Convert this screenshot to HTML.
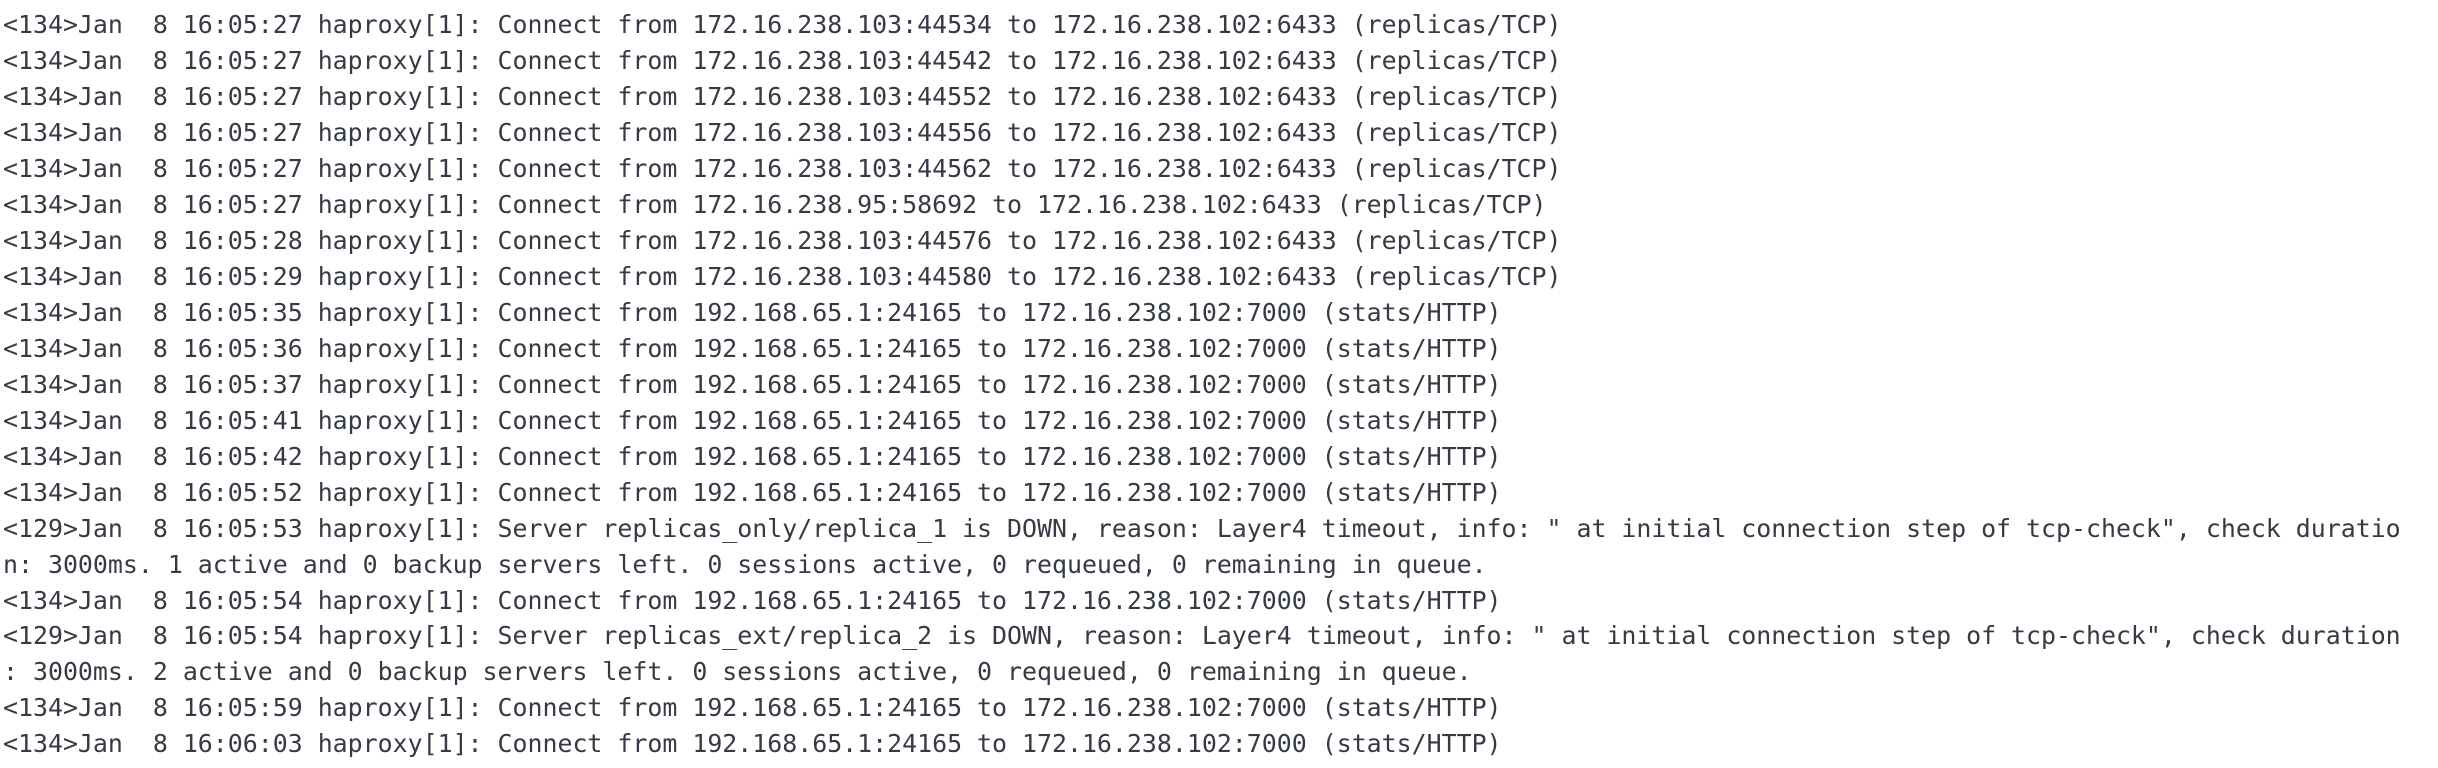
<!DOCTYPE html>
<html><head><meta charset="utf-8"><style>
html,body{margin:0;padding:0;background:#fff;width:2438px;height:768px;overflow:hidden}
pre{margin:0;padding:7px 0 0 3px;font-family:"DejaVu Sans Mono","Liberation Mono",monospace;font-size:24.9px;line-height:35.97px;color:#353a44;white-space:pre}
</style></head><body><pre>&lt;134&gt;Jan  8 16:05:27 haproxy[1]: Connect from 172.16.238.103:44534 to 172.16.238.102:6433 (replicas/TCP)
&lt;134&gt;Jan  8 16:05:27 haproxy[1]: Connect from 172.16.238.103:44542 to 172.16.238.102:6433 (replicas/TCP)
&lt;134&gt;Jan  8 16:05:27 haproxy[1]: Connect from 172.16.238.103:44552 to 172.16.238.102:6433 (replicas/TCP)
&lt;134&gt;Jan  8 16:05:27 haproxy[1]: Connect from 172.16.238.103:44556 to 172.16.238.102:6433 (replicas/TCP)
&lt;134&gt;Jan  8 16:05:27 haproxy[1]: Connect from 172.16.238.103:44562 to 172.16.238.102:6433 (replicas/TCP)
&lt;134&gt;Jan  8 16:05:27 haproxy[1]: Connect from 172.16.238.95:58692 to 172.16.238.102:6433 (replicas/TCP)
&lt;134&gt;Jan  8 16:05:28 haproxy[1]: Connect from 172.16.238.103:44576 to 172.16.238.102:6433 (replicas/TCP)
&lt;134&gt;Jan  8 16:05:29 haproxy[1]: Connect from 172.16.238.103:44580 to 172.16.238.102:6433 (replicas/TCP)
&lt;134&gt;Jan  8 16:05:35 haproxy[1]: Connect from 192.168.65.1:24165 to 172.16.238.102:7000 (stats/HTTP)
&lt;134&gt;Jan  8 16:05:36 haproxy[1]: Connect from 192.168.65.1:24165 to 172.16.238.102:7000 (stats/HTTP)
&lt;134&gt;Jan  8 16:05:37 haproxy[1]: Connect from 192.168.65.1:24165 to 172.16.238.102:7000 (stats/HTTP)
&lt;134&gt;Jan  8 16:05:41 haproxy[1]: Connect from 192.168.65.1:24165 to 172.16.238.102:7000 (stats/HTTP)
&lt;134&gt;Jan  8 16:05:42 haproxy[1]: Connect from 192.168.65.1:24165 to 172.16.238.102:7000 (stats/HTTP)
&lt;134&gt;Jan  8 16:05:52 haproxy[1]: Connect from 192.168.65.1:24165 to 172.16.238.102:7000 (stats/HTTP)
&lt;129&gt;Jan  8 16:05:53 haproxy[1]: Server replicas_only/replica_1 is DOWN, reason: Layer4 timeout, info: " at initial connection step of tcp-check", check duratio
n: 3000ms. 1 active and 0 backup servers left. 0 sessions active, 0 requeued, 0 remaining in queue.
&lt;134&gt;Jan  8 16:05:54 haproxy[1]: Connect from 192.168.65.1:24165 to 172.16.238.102:7000 (stats/HTTP)
&lt;129&gt;Jan  8 16:05:54 haproxy[1]: Server replicas_ext/replica_2 is DOWN, reason: Layer4 timeout, info: " at initial connection step of tcp-check", check duration
: 3000ms. 2 active and 0 backup servers left. 0 sessions active, 0 requeued, 0 remaining in queue.
&lt;134&gt;Jan  8 16:05:59 haproxy[1]: Connect from 192.168.65.1:24165 to 172.16.238.102:7000 (stats/HTTP)
&lt;134&gt;Jan  8 16:06:03 haproxy[1]: Connect from 192.168.65.1:24165 to 172.16.238.102:7000 (stats/HTTP)</pre></body></html>
